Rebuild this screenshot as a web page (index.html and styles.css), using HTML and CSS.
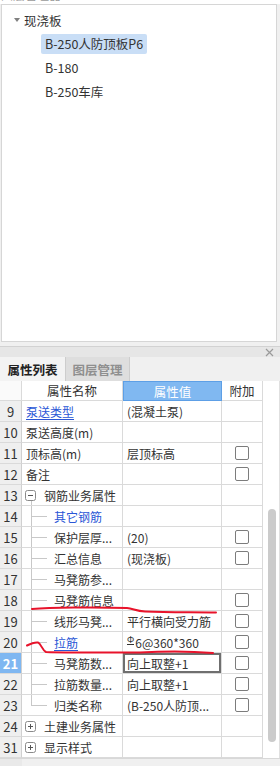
FILE: index.html
```html
<!DOCTYPE html>
<html>
<head>
<meta charset="utf-8">
<link rel="stylesheet" href="styles.css">
</head>
<body>
<div class="clip"><span>图层管理器</span></div>
<div class="tree-panel">
  <div class="tree-root"><span class="tri"></span>现浇板</div>
  <div class="tree-item sel">B-250人防顶板P6</div>
  <div class="tree-item">B-180</div>
  <div class="tree-item">B-250车库</div>
</div>
<div class="prop-panel">
  <div class="titlebar">
    <svg class="close" width="9" height="9" viewBox="0 0 9 9"><path d="M1 1L8 8M8 1L1 8" stroke="#9a9a9a" stroke-width="1.2" fill="none"/></svg>
  </div>
  <div class="tabs">
    <div class="tab active">属性列表</div>
    <div class="tab inactive">图层管理</div>
  </div>
  <div class="grid-wrap">
    <div class="grid">
      <div class="c hnum"></div>
      <div class="c hname">属性名称</div>
      <div class="c hval">属性值</div>
      <div class="c hadd">附加</div>

      <div class="c num">9</div>
      <div class="c name"><span class="link u">泵送类型</span></div>
      <div class="c val">(混凝土泵)</div>
      <div class="c add"></div>

      <div class="c num">10</div>
      <div class="c name">泵送高度(m)</div>
      <div class="c val"></div>
      <div class="c add"></div>

      <div class="c num">11</div>
      <div class="c name">顶标高(m)</div>
      <div class="c val">层顶标高</div>
      <div class="c add"><span class="cb"></span></div>

      <div class="c num">12</div>
      <div class="c name">备注</div>
      <div class="c val"></div>
      <div class="c add"><span class="cb"></span></div>

      <div class="c num">13</div>
      <div class="c name group open"><svg class="box" width="11" height="11" viewBox="0 0 11 11"><rect x="0.5" y="0.5" width="10" height="10" rx="2" fill="#fff" stroke="#8a8a8a"/><path d="M3 5.5H8" stroke="#555" stroke-width="1"/></svg>钢筋业务属性</div>
      <div class="c val"></div>
      <div class="c add"></div>

      <div class="c num">14</div>
      <div class="c name child"><span class="link">其它钢筋</span></div>
      <div class="c val"></div>
      <div class="c add"></div>

      <div class="c num">15</div>
      <div class="c name child">保护层厚...</div>
      <div class="c val">(20)</div>
      <div class="c add"><span class="cb"></span></div>

      <div class="c num">16</div>
      <div class="c name child">汇总信息</div>
      <div class="c val">(现浇板)</div>
      <div class="c add"><span class="cb"></span></div>

      <div class="c num">17</div>
      <div class="c name child">马凳筋参...</div>
      <div class="c val"></div>
      <div class="c add"></div>

      <div class="c num">18</div>
      <div class="c name child">马凳筋信息</div>
      <div class="c val"></div>
      <div class="c add"><span class="cb"></span></div>

      <div class="c num">19</div>
      <div class="c name child">线形马凳...</div>
      <div class="c val">平行横向受力筋</div>
      <div class="c add"><span class="cb"></span></div>

      <div class="c num">20</div>
      <div class="c name child"><span class="link u">拉筋</span></div>
      <div class="c val"><span class="rebar">Φ</span>6@360*360</div>
      <div class="c add"><span class="cb"></span></div>

      <div class="c num cur">21</div>
      <div class="c name child">马凳筋数...</div>
      <div class="c val edit">向上取整+1</div>
      <div class="c add"><span class="cb"></span></div>

      <div class="c num">22</div>
      <div class="c name child">拉筋数量...</div>
      <div class="c val">向上取整+1</div>
      <div class="c add"><span class="cb"></span></div>

      <div class="c num">23</div>
      <div class="c name child last">归类名称</div>
      <div class="c val">(B-250人防顶...</div>
      <div class="c add"><span class="cb"></span></div>

      <div class="c num">24</div>
      <div class="c name group"><svg class="box" width="11" height="11" viewBox="0 0 11 11"><rect x="0.5" y="0.5" width="10" height="10" rx="2" fill="#fff" stroke="#8a8a8a"/><path d="M3 5.5H8M5.5 3V8" stroke="#555" stroke-width="1"/></svg>土建业务属性</div>
      <div class="c val"></div>
      <div class="c add"></div>

      <div class="c num">31</div>
      <div class="c name group"><svg class="box" width="11" height="11" viewBox="0 0 11 11"><rect x="0.5" y="0.5" width="10" height="10" rx="2" fill="#fff" stroke="#8a8a8a"/><path d="M3 5.5H8M5.5 3V8" stroke="#555" stroke-width="1"/></svg>显示样式</div>
      <div class="c val"></div>
      <div class="c add"></div>
    </div>
    <div class="scroll"><div class="thumb"></div></div>
  </div>
  <div class="foot"><div class="foot-num"></div></div>
</div>
<svg class="marks" width="280" height="766" viewBox="0 0 280 766">
  <path d="M32 609 C 50 607.5, 95 607, 127 608 C 133 608.5, 136 611, 145 611.5 C 170 612.5, 195 612, 216 612.5" stroke="#e8132b" stroke-width="2" fill="none" stroke-linecap="round"/>
  <path d="M27 645.5 C 30 644, 34 642, 38 642.5 C 41 643.5, 42 650, 46 652 C 70 653, 110 652.5, 140 652.5 C 165 651, 190 651, 213 653" stroke="#e8132b" stroke-width="2" fill="none" stroke-linecap="round"/>
</svg>
</body>
</html>
```

FILE: styles.css
```css
* { box-sizing: border-box; }
html, body { margin: 0; padding: 0; }
body {
  width: 280px;
  height: 766px;
  overflow: hidden;
  position: relative;
  background: #f0f0f0;
  font-family: "Noto Sans CJK SC", "Noto Sans", sans-serif;
  font-size: 12px;
  color: #333;
}
.clip {
  height: 4px;
  overflow: hidden;
  background: #fff;
}
.clip span {
  display: block;
  margin-top: -12px;
  padding-left: 1px;
  line-height: 14px;
  color: #9a9a9a;
}
.tree-panel {
  height: 338px;
  margin: 0 3px 0 1px;
  background: #fff;
  border: 1px solid #d6d6d6;
  padding-top: 5px;
  display: flex;
  flex-direction: column;
  gap: 4px;
  font-size: 12.5px;
}
.tree-root {
  height: 20px;
  display: flex;
  align-items: center;
  padding-left: 12px;
}
.tri {
  width: 0;
  height: 0;
  border-left: 3px solid transparent;
  border-right: 3px solid transparent;
  border-top: 4px solid #808080;
  margin-right: 4px;
}
.tree-item {
  height: 20px;
  line-height: 20px;
  margin-left: 39px;
  padding: 0 4px;
  align-self: flex-start;
  border-radius: 2px;
}
.tree-item.sel { background: #c9def6; }
.prop-panel { margin-top: 4px; }
.titlebar {
  height: 11px;
  background: #e6e6e6;
  border-top: 1px solid #d2d2d2;
  display: flex;
  justify-content: flex-end;
  align-items: center;
  padding-right: 6px;
}
.tabs {
  height: 24px;
  display: flex;
  background: #f0f0f0;
}
.tab {
  display: flex;
  align-items: center;
  justify-content: center;
  font-size: 12.5px;
  font-weight: bold;
}
.tab.active { width: 65px; color: #222; background: #f3f3f3; }
.tab.inactive {
  width: 65px;
  color: #8f8f8f;
  background: #dedede;
  border-left: 1px solid #cdcdcd;
  border-right: 1px solid #cdcdcd;
}
.grid-wrap {
  display: flex;
  height: 377px;
  background: #fff;
}
.grid {
  width: 263px;
  display: grid;
  grid-template-columns: 22px 101px 99px 41px;
  grid-template-rows: 20px repeat(17, 21px);
}
.c {
  display: flex;
  align-items: center;
  border-right: 1px solid #dadada;
  border-bottom: 1px solid #dadada;
  white-space: nowrap;
  overflow: hidden;
}
.hnum { background: #fafafa; }
.hname, .hadd { justify-content: center; background: #fff; font-size: 12.5px; }
.hval {
  justify-content: center;
  background: #80b8f1;
  color: #fff;
  border: 1px solid #5d9fe6;
  font-size: 12.5px;
}
.num {
  justify-content: center;
  background: #efefef;
  border-right-color: #d0d0d0;
  font-size: 13px;
  color: #333;
}
.num.cur {
  background: #7fb7f1;
  color: #fff;
  font-weight: bold;
}
.name { padding-left: 4px; position: relative; }
.val { padding-left: 4px; }
.val.edit { box-shadow: inset 0 0 0 2px #6f6f6f; }
.add { justify-content: center; }
.cb {
  width: 14px;
  height: 14px;
  border: 1px solid #7c7c7c;
  border-radius: 2px;
  background: #fff;
}
.link { color: #2a56d6; }
.link.u { text-decoration: underline; text-underline-offset: 2px; }
.group { padding-left: 3px; }
.group .box { margin-right: 8px; flex: none; }
.group.open::after {
  content: "";
  position: absolute;
  left: 9px;
  top: 16px;
  bottom: -1px;
  border-left: 1px solid #c8c8c8;
}
.child { padding-left: 32px; }
.child::before {
  content: "";
  position: absolute;
  left: 9px;
  top: 0;
  bottom: -1px;
  border-left: 1px solid #c8c8c8;
}
.child::after {
  content: "";
  position: absolute;
  left: 10px;
  width: 15px;
  top: 10px;
  border-top: 1px solid #c8c8c8;
}
.child.last::before { bottom: auto; height: 11px; }
.rebar {
  font-size: 9px;
  line-height: 9px;
  border-bottom: 1px solid #333;
  margin-right: 1px;
  position: relative;
  top: -2px;
}
.scroll {
  width: 17px;
  background: #fff;
  border-right: 1px solid #e0e0e0;
  padding-top: 128px;
}
.thumb {
  width: 8px;
  height: 233px;
  margin-left: 5px;
  border-radius: 4px;
  background: #cbcbcb;
}
.foot {
  height: 8px;
  background: #f0f0f0;
  border-top: 1px solid #d8d8d8;
}
.foot-num {
  width: 22px;
  height: 100%;
  background: #e9e9e9;
}
.marks {
  position: absolute;
  left: 0;
  top: 0;
  pointer-events: none;
}
```
